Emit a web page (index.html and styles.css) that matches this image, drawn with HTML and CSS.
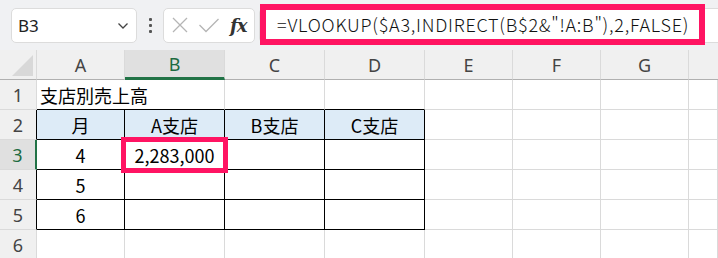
FILE: index.html
```html
<!DOCTYPE html>
<html lang="ja">
<head>
<meta charset="utf-8">
<link rel="stylesheet" href="styles.css">
</head>
<body>
<div class="toolbar">
  <div class="namebox">
    <span class="name">B3</span>
    <svg class="chev" width="12" height="8" viewBox="0 0 12 8"><path d="M1.5 1.5 L6 6 L10.5 1.5" fill="none" stroke="#444" stroke-width="1.3"/></svg>
  </div>
  <div class="dots"><span></span><span></span><span></span></div>
  <div class="fxbox">
    <svg width="18" height="18" viewBox="0 0 18 18"><path d="M2 2 L16 16 M16 2 L2 16" stroke="#b5b5b5" stroke-width="1.3" fill="none"/></svg>
    <svg width="22" height="18" viewBox="0 0 22 18"><path d="M1.5 9 L8 15.5 L20.5 3" stroke="#b5b5b5" stroke-width="1.3" fill="none"/></svg>
    <span class="fx">fx</span>
  </div>
  <div class="formula">
    <div class="hl">=VLOOKUP($A3,INDIRECT(B$2&amp;"!A:B"),2,FALSE)</div>
  </div>
</div>
<div class="sheet">
  <div class="corner"><span class="tri"></span></div>
  <div class="ch">A</div><div class="ch sel">B</div><div class="ch">C</div><div class="ch">D</div><div class="ch">E</div><div class="ch">F</div><div class="ch">G</div><div class="ch last"></div>

  <div class="rh">1</div>
  <div class="c tb-top title">支店別売上高</div><div class="c tb-top"></div><div class="c tb-top"></div><div class="c tb-top bl"></div><div class="c"></div><div class="c"></div><div class="c"></div><div class="c"></div>

  <div class="rh bk">2</div>
  <div class="c t hd">月</div><div class="c t hd">A支店</div><div class="c t hd">B支店</div><div class="c t hd">C支店</div><div class="c"></div><div class="c"></div><div class="c"></div><div class="c"></div>

  <div class="rh selr">3</div>
  <div class="c t">4</div><div class="c t"><span class="pink">2,283,000</span></div><div class="c t"></div><div class="c t"></div><div class="c"></div><div class="c"></div><div class="c"></div><div class="c"></div>

  <div class="rh bk">4</div>
  <div class="c t">5</div><div class="c t"></div><div class="c t"></div><div class="c t"></div><div class="c"></div><div class="c"></div><div class="c"></div><div class="c"></div>

  <div class="rh bk">5</div>
  <div class="c t">6</div><div class="c t"></div><div class="c t"></div><div class="c t"></div><div class="c"></div><div class="c"></div><div class="c"></div><div class="c"></div>

  <div class="rh">6</div>
  <div class="c"></div><div class="c"></div><div class="c"></div><div class="c"></div><div class="c"></div><div class="c"></div><div class="c"></div><div class="c"></div>
</div>
</body>
</html>
```
FILE: styles.css
```css
* { box-sizing: border-box; }
html, body { margin: 0; padding: 0; }
body {
  width: 718px;
  height: 258px;
  overflow: hidden;
  background: #fff;
  font-family: "Noto Sans CJK JP", "Noto Sans", sans-serif;
  color: #000;
}
.toolbar {
  height: 50px;
  background: #f0f1f3;
  display: flex;
  align-items: center;
  padding-left: 11px;
}
.namebox {
  width: 126px;
  height: 35px;
  background: #fff;
  border: 1px solid #dcdcdc;
  border-radius: 5px;
  display: flex;
  align-items: center;
  justify-content: space-between;
  padding: 0 7px 0 6px;
}
.name { font-size: 17px; color: #222; font-family: "Noto Sans", sans-serif; }
.chev { margin-top: 2px; }
.dots {
  width: 26px;
  display: flex;
  flex-direction: column;
  align-items: center;
  gap: 3px;
}
.dots span { width: 3px; height: 3px; background: #555; border-radius: 1px; }
.fxbox {
  width: 92px;
  height: 35px;
  background: #fff;
  border: 1px solid #dcdcdc;
  border-radius: 5px;
  display: flex;
  align-items: center;
  padding-left: 7px;
  gap: 9px;
}
.fx {
  font-family: "DejaVu Serif", "Liberation Serif", serif;
  font-style: italic;
  font-weight: bold;
  font-size: 18px;
  color: #333;
  margin-left: 1px;
  letter-spacing: -1px;
}
.formula {
  flex: 1;
  height: 35px;
  margin-left: 4px;
  margin-right: -6px;
  background: #fff;
  border: 1px solid #dcdcdc;
  border-radius: 5px;
  position: relative;
}
.hl {
  position: absolute;
  left: 0;
  top: -5px;
  width: 445px;
  height: 41px;
  border: 6px solid #ff1463;
  background: #fff;
  font-size: 18px;
  font-weight: 300;
  line-height: 28px;
  padding-left: 11px;
  color: #111;
  white-space: nowrap;
  font-family: "Noto Sans CJK JP", sans-serif;
  letter-spacing: 0.75px;
}
.sheet {
  display: grid;
  grid-template-columns: 37px 88px 100px 100px 100px 88px 88px 88px 29px;
  grid-auto-rows: 30px;
}
.sheet > div {
  border-right: 1px solid #dadada;
  border-bottom: 1px solid #dadada;
  font-size: 18px;
  display: flex;
  align-items: center;
  justify-content: center;
  white-space: nowrap;
}
.corner { background: #f0f0f0; position: relative; border-bottom-color: #b0b0b0 !important; }
.tri {
  position: absolute;
  left: 12px;
  bottom: 3px;
  width: 21px;
  height: 21px;
  background: #d8d8d8;
  clip-path: polygon(100% 0, 100% 100%, 0 100%);
}
.ch {
  background: #f0f0f0;
  color: #444;
  border-bottom-color: #b0b0b0 !important;
  font-family: "Noto Sans", sans-serif;
  font-size: 18px !important;
}
.ch.sel {
  background: #e0e0e0;
  color: #1e6b41;
  border-bottom: 3px solid #217346 !important;
}
.ch.last { border-right: none !important; }
.rh {
  background: #f0f0f0;
  color: #444;
  font-family: "Noto Sans", sans-serif;
  font-size: 18px !important;
}
.rh.bk { border-right-color: #000 !important; }
.rh.selr {
  background: #e0e0e0;
  color: #1e6b41;
  border-right: 2px solid #217346 !important;
}
.c.title { justify-content: flex-start; padding-left: 3px; overflow: visible; border-right: none !important; }
.c.tb-top { border-bottom-color: #000 !important; }
.c.t { border-right-color: #000 !important; border-bottom-color: #000 !important; }
.c.hd { background: #ddebf7; }
.pink {
  position: relative;
  display: flex;
  align-items: center;
  justify-content: center;
  width: 108px;
  height: 36px;
  margin: 0 -4px 0 -4px;
  border: 5px solid #ff1463;
  background: #fff;
  z-index: 2;
}
```
